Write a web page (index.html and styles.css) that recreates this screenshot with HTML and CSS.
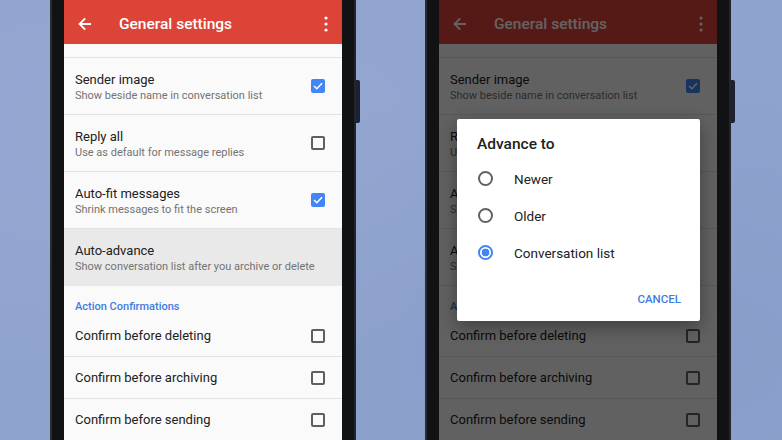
FILE: index.html
```html
<!doctype html>
<html>
<head>
    <meta charset="utf-8">
    <title>General settings</title>
    <link rel="stylesheet" href="styles.css">
</head>
<body>
    <div class="desk">

        <!-- Phone 1: settings list -->
        <div class="phone">
            <div class="screen">
                <header class="appbar">
                    <svg class="appbar-back" width="14" height="14" viewBox="0 0 14 14">
                        <path d="M13 7H2M7.2 1.3L1.5 7l5.7 5.7" fill="none" stroke="#fff" stroke-width="1.8"/>
                    </svg>
                    <h1 class="appbar-title">General settings</h1>
                    <svg class="appbar-more" width="4" height="16" viewBox="0 0 4 16">
                        <circle cx="2" cy="2" r="1.6" fill="#fff"/>
                        <circle cx="2" cy="8" r="1.6" fill="#fff"/>
                        <circle cx="2" cy="14" r="1.6" fill="#fff"/>
                    </svg>
                </header>
                <ul class="prefs">
                    <li class="pref pref-stub"></li>
                    <li class="pref pref-two">
                        <div class="pref-text">
                            <span class="pref-title">Sender image</span>
                            <span class="pref-sub">Show beside name in conversation list</span>
                        </div>
                        <span class="check check-on"><svg width="10" height="8" viewBox="0 0 10 8"><path d="M1 4l2.8 2.7L9 1.2" fill="none" stroke="#fff" stroke-width="1.5"/></svg></span>
                    </li>
                    <li class="pref pref-two">
                        <div class="pref-text">
                            <span class="pref-title">Reply all</span>
                            <span class="pref-sub">Use as default for message replies</span>
                        </div>
                        <span class="check"></span>
                    </li>
                    <li class="pref pref-two">
                        <div class="pref-text">
                            <span class="pref-title">Auto-fit messages</span>
                            <span class="pref-sub">Shrink messages to fit the screen</span>
                        </div>
                        <span class="check check-on"><svg width="10" height="8" viewBox="0 0 10 8"><path d="M1 4l2.8 2.7L9 1.2" fill="none" stroke="#fff" stroke-width="1.5"/></svg></span>
                    </li>
                    <li class="pref pref-two pref-pressed">
                        <div class="pref-text">
                            <span class="pref-title">Auto-advance</span>
                            <span class="pref-sub">Show conversation list after you archive or delete</span>
                        </div>
                    </li>
                    <li class="pref-header">Action Confirmations</li>
                    <li class="pref">
                        <span class="pref-title">Confirm before deleting</span>
                        <span class="check"></span>
                    </li>
                    <li class="pref">
                        <span class="pref-title">Confirm before archiving</span>
                        <span class="check"></span>
                    </li>
                    <li class="pref">
                        <span class="pref-title">Confirm before sending</span>
                        <span class="check"></span>
                    </li>
                </ul>
            </div>
            <span class="side-key"></span>
        </div>

        <!-- Phone 2: same list with the auto-advance dialog open -->
        <div class="phone">
            <div class="screen">
                <header class="appbar">
                    <svg class="appbar-back" width="14" height="14" viewBox="0 0 14 14">
                        <path d="M13 7H2M7.2 1.3L1.5 7l5.7 5.7" fill="none" stroke="#fff" stroke-width="1.8"/>
                    </svg>
                    <h1 class="appbar-title">General settings</h1>
                    <svg class="appbar-more" width="4" height="16" viewBox="0 0 4 16">
                        <circle cx="2" cy="2" r="1.6" fill="#fff"/>
                        <circle cx="2" cy="8" r="1.6" fill="#fff"/>
                        <circle cx="2" cy="14" r="1.6" fill="#fff"/>
                    </svg>
                </header>
                <ul class="prefs">
                    <li class="pref pref-stub"></li>
                    <li class="pref pref-two">
                        <div class="pref-text">
                            <span class="pref-title">Sender image</span>
                            <span class="pref-sub">Show beside name in conversation list</span>
                        </div>
                        <span class="check check-on"><svg width="10" height="8" viewBox="0 0 10 8"><path d="M1 4l2.8 2.7L9 1.2" fill="none" stroke="#fff" stroke-width="1.5"/></svg></span>
                    </li>
                    <li class="pref pref-two">
                        <div class="pref-text">
                            <span class="pref-title">Reply all</span>
                            <span class="pref-sub">Use as default for message replies</span>
                        </div>
                        <span class="check"></span>
                    </li>
                    <li class="pref pref-two">
                        <div class="pref-text">
                            <span class="pref-title">Auto-fit messages</span>
                            <span class="pref-sub">Shrink messages to fit the screen</span>
                        </div>
                        <span class="check check-on"><svg width="10" height="8" viewBox="0 0 10 8"><path d="M1 4l2.8 2.7L9 1.2" fill="none" stroke="#fff" stroke-width="1.5"/></svg></span>
                    </li>
                    <li class="pref pref-two">
                        <div class="pref-text">
                            <span class="pref-title">Auto-advance</span>
                            <span class="pref-sub">Show conversation list after you archive or delete</span>
                        </div>
                    </li>
                    <li class="pref-header">Action Confirmations</li>
                    <li class="pref">
                        <span class="pref-title">Confirm before deleting</span>
                        <span class="check"></span>
                    </li>
                    <li class="pref">
                        <span class="pref-title">Confirm before archiving</span>
                        <span class="check"></span>
                    </li>
                    <li class="pref">
                        <span class="pref-title">Confirm before sending</span>
                        <span class="check"></span>
                    </li>
                </ul>
                <div class="scrim"></div>
                <div class="dialog">
                    <h2 class="dialog-title">Advance to</h2>
                    <ul class="choices">
                        <li class="choice"><span class="radio"></span>Newer</li>
                        <li class="choice"><span class="radio"></span>Older</li>
                        <li class="choice"><span class="radio radio-on"></span>Conversation list</li>
                    </ul>
                    <div class="dialog-actions">
                        <button class="flat-btn">CANCEL</button>
                    </div>
                </div>
            </div>
            <span class="side-key"></span>
        </div>

    </div>
</body>
</html>
```

FILE: styles.css
```css
html, body {
    margin: 0;
    height: 440px;
    overflow: hidden;
}
body {
    background: #8fa3cf;
    font-family: Roboto, "Noto Sans", sans-serif;
}
.desk {
    display: flex;
    gap: 69px;
    padding-left: 50px;
    height: 440px;
    background:
        radial-gradient(ellipse at 20% 30%, rgba(255, 255, 255, 0.06), transparent 60%),
        radial-gradient(ellipse at 85% 80%, rgba(40, 60, 120, 0.06), transparent 60%);
}

/* Handset */
.phone {
    position: relative;
    width: 306px;
    padding: 0 14px;
    box-sizing: border-box;
    background: #111214;
    box-shadow: inset 2px 0 0 #2a2c31, inset -2px 0 0 #23252a;
}
.side-key {
    position: absolute;
    right: -4px;
    top: 80px;
    width: 4px;
    height: 43px;
    background: #1d2232;
    border-radius: 0 2px 2px 0;
}
.screen {
    position: relative;
    height: 440px;
    overflow: hidden;
    background: #fafafa;
}

/* Toolbar */
.appbar {
    display: flex;
    align-items: center;
    height: 44px;
    box-sizing: border-box;
    padding: 3px 14px 0;
    background: #db4437;
    color: #fff;
}
.appbar-title {
    flex: 1;
    margin: 0 0 0 27px;
    font-size: 15.5px;
    font-weight: 500;
}

/* Preference list */
.prefs {
    margin: 0;
    padding: 0;
    list-style: none;
}
.pref {
    display: flex;
    align-items: center;
    justify-content: space-between;
    height: 42px;
    box-sizing: border-box;
    padding: 0 17px 0 11px;
    border-bottom: 1px solid #e3e3e3;
}
.pref-stub {
    height: 14px;
}
.pref-two {
    height: 57px;
}
.pref-pressed {
    background: #e9e9e9;
    border-bottom-color: #e9e9e9;
}
.pref-text {
    display: flex;
    flex-direction: column;
    padding-top: 4px;
}
.pref-title {
    font-size: 13px;
    line-height: 16px;
    color: #212121;
}
.pref-sub {
    font-size: 11px;
    line-height: 16px;
    color: #737373;
}
.pref-header {
    height: 29px;
    box-sizing: border-box;
    padding: 13px 11px 0;
    font-size: 11px;
    line-height: 16px;
    font-weight: 500;
    color: #3f7de0;
}

/* Checkbox */
.check {
    display: flex;
    align-items: center;
    justify-content: center;
    width: 14px;
    height: 14px;
    box-sizing: border-box;
    border: 2px solid #5f5f5f;
    border-radius: 2px;
}
.check-on {
    background: #4285f4;
    border-color: #4285f4;
}

/* Dialog over the list */
.scrim {
    position: absolute;
    inset: 0;
    background: rgba(0, 0, 0, 0.61);
}
.dialog {
    position: absolute;
    left: 18px;
    top: 119px;
    width: 243px;
    height: 202px;
    box-sizing: border-box;
    display: flex;
    flex-direction: column;
    background: #fff;
    border-radius: 2px;
    box-shadow: 0 6px 18px rgba(0, 0, 0, 0.35);
}
.dialog-title {
    margin: 0;
    padding: 17px 20px 0;
    font-size: 15.5px;
    line-height: 16px;
    font-weight: 500;
    color: #212121;
}
.choices {
    margin: 8px 0 0;
    padding: 0;
    list-style: none;
}
.choice {
    display: flex;
    align-items: center;
    height: 37px;
    padding-left: 21px;
    font-size: 13.5px;
    color: #212121;
}
.radio {
    width: 15px;
    height: 15px;
    box-sizing: border-box;
    margin-right: 21px;
    border: 2px solid #616161;
    border-radius: 50%;
}
.radio-on {
    border-color: #4285f4;
    background: radial-gradient(circle, #4285f4 0 3.6px, transparent 4.2px);
}
.dialog-actions {
    display: flex;
    justify-content: flex-end;
    margin-top: auto;
    padding: 0 19px 14px;
}
.flat-btn {
    padding: 0;
    border: 0;
    background: none;
    font-family: inherit;
    font-size: 11.5px;
    line-height: 16px;
    font-weight: 500;
    color: #3f7de0;
}
```
